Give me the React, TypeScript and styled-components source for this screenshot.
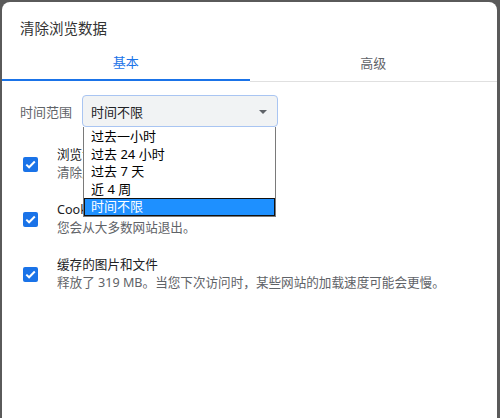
import React from "react";
import styled, { createGlobalStyle } from "styled-components";

const Global = createGlobalStyle`
  html, body { margin: 0; padding: 0; height: 100%; }
  body {
    background: #5a5a5a;
    font-family: "Noto Sans", "Noto Sans CJK SC", sans-serif;
    overflow: hidden;
  }
  #root { height: 100%; }
`;

const Page = styled.div`
  height: 418px;
  padding: 2px 3px 0 2px;
  box-sizing: border-box;
  display: flex;
`;

const Dialog = styled.div`
  flex: 1;
  background: #ffffff;
  border-radius: 8px 8px 0 0;
  display: flex;
  flex-direction: column;
  position: relative;
`;

const Title = styled.h1`
  margin: 0;
  padding: 16px 18px 0;
  height: 42px;
  box-sizing: border-box;
  font-size: 14.5px;
  line-height: 20px;
  font-weight: 400;
  color: #333333;
`;

const TabBar = styled.div`
  display: flex;
  align-items: flex-start;
`;

const Tab = styled.div<{ $active?: boolean }>`
  flex: 1;
  box-sizing: border-box;
  height: ${(p) => (p.$active ? "37px" : "38px")};
  display: flex;
  align-items: center;
  justify-content: center;
  font-size: 13px;
  color: ${(p) => (p.$active ? "#1a73e8" : "#5f6368")};
  border-bottom: ${(p) => (p.$active ? "2px solid #1a73e8" : "1px solid #e0e0e0")};
`;

const Content = styled.div`
  padding: 13px 0 0 18px;
  display: flex;
  flex-direction: column;
  gap: 19px;
  position: relative;
`;

const RangeRow = styled.div`
  display: flex;
  align-items: center;
  gap: 10px;
`;

const Label = styled.span`
  font-size: 13px;
  color: #5f6368;
  width: 52px;
  white-space: nowrap;
`;

const Select = styled.div`
  width: 196px;
  height: 32px;
  box-sizing: border-box;
  background: #f1f3f4;
  border: 1px solid #a9c5f2;
  border-radius: 4px;
  display: flex;
  align-items: center;
  justify-content: space-between;
  padding: 0 10px 0 8px;
  font-size: 13px;
  color: #202124;
`;

const Arrow = styled.span`
  width: 0;
  height: 0;
  border-left: 4px solid transparent;
  border-right: 4px solid transparent;
  border-top: 4px solid #5f6368;
  margin-top: 2px;
`;

const Dropdown = styled.div`
  position: absolute;
  left: 81px;
  top: 45px;
  width: 193px;
  box-sizing: border-box;
  background: #ffffff;
  border: 1px solid #7a7a7a;
  border-top: none;
  padding: 1px 0 0;
  z-index: 2;
`;

const Option = styled.div<{ $selected?: boolean }>`
  height: 17.5px;
  box-sizing: border-box;
  padding-left: ${(p) => (p.$selected ? "6px" : "7px")};
  font-size: 13px;
  white-space: nowrap;
  color: ${(p) => (p.$selected ? "#ffffff" : "#000000")};
  background: ${(p) => (p.$selected ? "#1e90ff" : "transparent")};
  border: ${(p) => (p.$selected ? "1px solid #111111" : "none")};
  line-height: ${(p) => (p.$selected ? "15.5px" : "17.5px")};
`;

const Item = styled.div`
  display: flex;
  align-items: center;
  gap: 19px;
  padding-left: 3px;
`;

const Check = styled.div`
  width: 15px;
  height: 15px;
  flex: none;
  border-radius: 2px;
  background: #1a73e8;
  display: flex;
  align-items: center;
  justify-content: center;
`;

const ItemText = styled.div`
  display: flex;
  flex-direction: column;
  font-size: 12.6px;
  line-height: 18px;
  white-space: nowrap;
`;

const ItemTitle = styled.span`
  color: #202124;
`;

const ItemDesc = styled.span`
  color: #5f6368;
`;

const CheckMark = () => (
  <svg width="11" height="9" viewBox="0 0 11 9">
    <path d="M1.3 4.6 L4.1 7.3 L9.8 1.5" fill="none" stroke="#ffffff" strokeWidth="2" />
  </svg>
);

const options = ["过去一小时", "过去 24 小时", "过去 7 天", "近 4 周", "时间不限"];

const items = [
  { title: "浏览记录", desc: "清除所有已登录设备上的历史记录" },
  { title: "Cookie 及其他网站数据", desc: "您会从大多数网站退出。" },
  { title: "缓存的图片和文件", desc: "释放了 319 MB。当您下次访问时，某些网站的加载速度可能会更慢。" },
];

export default function App() {
  return (
    <>
      <Global />
      <Page>
        <Dialog>
          <Title>清除浏览数据</Title>
          <TabBar>
            <Tab $active>基本</Tab>
            <Tab>高级</Tab>
          </TabBar>
          <Content>
            <RangeRow>
              <Label>时间范围</Label>
              <Select>
                <span>时间不限</span>
                <Arrow />
              </Select>
            </RangeRow>
            <Dropdown>
              {options.map((o, i) => (
                <Option key={o} $selected={i === options.length - 1}>
                  {o}
                </Option>
              ))}
            </Dropdown>
            {items.map((it) => (
              <Item key={it.title}>
                <Check>
                  <CheckMark />
                </Check>
                <ItemText>
                  <ItemTitle>{it.title}</ItemTitle>
                  <ItemDesc>{it.desc}</ItemDesc>
                </ItemText>
              </Item>
            ))}
          </Content>
        </Dialog>
      </Page>
    </>
  );
}
